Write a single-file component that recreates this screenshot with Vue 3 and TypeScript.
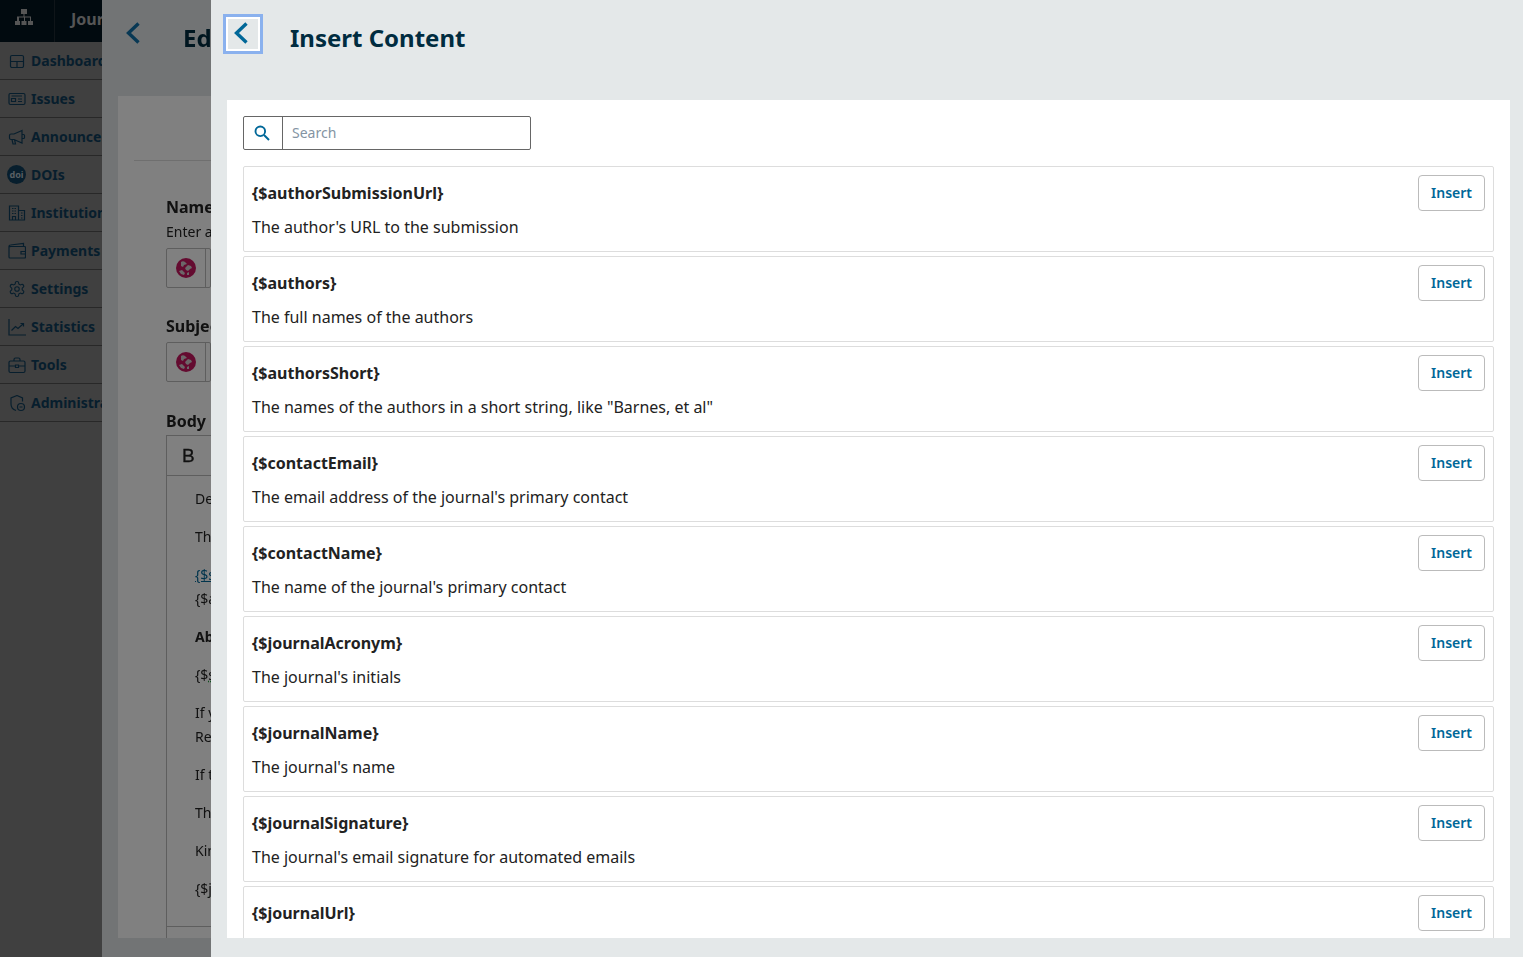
<script setup lang="ts">
interface NavItem {
  label: string;
  icon: string;
}

interface Variable {
  name: string;
  description: string;
}

const navItems: NavItem[] = [
  { label: 'Dashboard', icon: 'M4 3.5h10a1.5 1.5 0 0 1 1.5 1.5v9a1.5 1.5 0 0 1-1.5 1.5H4A1.5 1.5 0 0 1 2.500 14V5A1.500 1.500 0 0 1 4 3.500zM2.500 9.500h13M9 9.500v6' },
  { label: 'Issues', icon: 'M2 3.500h13.500a1.500 1.500 0 0 1 1.500 1.500v8a1.500 1.500 0 0 1-1.500 1.500H2.500A1.500 1.500 0 0 1 1 13V5a1.500 1.500 0 0 1 1-1.500zM3.500 6h10.500M10 9h4M10 11.500h4M3.500 8.500h4v3h-4z' },
  { label: 'Announcements', icon: 'M14 2.500 6 6H3a1.500 1.500 0 0 0-1.500 1.500v2.500A1.500 1.500 0 0 0 3 11.500h3l8 3.500zM14 6.500h1.500a1 1 0 0 1 1 1v2a1 1 0 0 1-1 1H14M4 11.500l1 4.500h2.500l-1-4.500' },
  { label: 'DOIs', icon: '' },
  { label: 'Institutions', icon: 'M1.500 16V2h9v14zM10.500 6.500h6V16h-6zM4 4.500h1.500M6.500 4.500H8M4 7h1.500M6.500 7H8M4 9.500h1.500M6.500 9.500H8M4.500 16v-3.500h3V16M13 9h1.500M13 11.500h1.500M13 14h1.500' },
  { label: 'Payments', icon: 'M1 4.500V15a1 1 0 0 0 1 1h14.500a1 1 0 0 0 1-1V5.500a1 1 0 0 0-1-1H2.500A1.500 1.500 0 0 1 1 4.500a1.500 1.500 0 0 1 1.500-1.500L15.500 1.500v3M13 9.500h4.500v2.500H13z' },
  { label: 'Settings', icon: 'gear' },
  { label: 'Statistics', icon: 'M1 1v16h17M3.500 12.500l4-4 2.500 2 5-4.500M12.500 5.500h3v3' },
  { label: 'Tools', icon: 'M2.500 5h13a1.500 1.500 0 0 1 1.500 1.500V15a1.500 1.500 0 0 1-1.500 1.500h-13A1.500 1.500 0 0 1 1 15V6.500A1.500 1.500 0 0 1 2.500 5zM6 5V3.500A1.500 1.500 0 0 1 7.500 2h3A1.500 1.500 0 0 1 12 3.500V5M1 10h6M11 10h6M7.500 9h3v2.500h-3z' },
  { label: 'Administration', icon: 'M9 1.500 3 4v6c0 3 2 5.500 5 6.500M9 1.500 14.500 4v3.500M16.500 13a3.500 3.500 0 1 1-7 0 3.500 3.500 0 0 1 7 0zM11.500 13h3' },
];

const variables: Variable[] = [
  { name: '{$authorSubmissionUrl}', description: "The author's URL to the submission" },
  { name: '{$authors}', description: 'The full names of the authors' },
  { name: '{$authorsShort}', description: 'The names of the authors in a short string, like "Barnes, et al"' },
  { name: '{$contactEmail}', description: "The email address of the journal's primary contact" },
  { name: '{$contactName}', description: "The name of the journal's primary contact" },
  { name: '{$journalAcronym}', description: "The journal's initials" },
  { name: '{$journalName}', description: "The journal's name" },
  { name: '{$journalSignature}', description: "The journal's email signature for automated emails" },
  { name: '{$journalUrl}', description: "The URL to the journal's homepage" },
];

const gearPath =
  'M12.220 2h-.44a2 2 0 0 0-2 2v.18a2 2 0 0 1-1 1.730l-.43.25a2 2 0 0 1-2 0l-.15-.08a2 2 0 0 0-2.730.730l-.22.38a2 2 0 0 0 .73 2.730l.15.1a2 2 0 0 1 1 1.720v.51a2 2 0 0 1-1 1.740l-.15.09a2 2 0 0 0-.73 2.730l.22.38a2 2 0 0 0 2.730.730l.15-.08a2 2 0 0 1 2 0l.43.25a2 2 0 0 1 1 1.730V20a2 2 0 0 0 2 2h.44a2 2 0 0 0 2-2v-.18a2 2 0 0 1 1-1.730l.43-.25a2 2 0 0 1 2 0l.15.08a2 2 0 0 0 2.730-.73l.22-.39a2 2 0 0 0-.73-2.730l-.15-.08a2 2 0 0 1-1-1.740v-.5a2 2 0 0 1 1-1.740l.15-.09a2 2 0 0 0 .73-2.730l-.22-.38a2 2 0 0 0-2.730-.73l-.15.08a2 2 0 0 1-2 0l-.43-.25a2 2 0 0 1-1-1.730V4a2 2 0 0 0-2-2zM15 12a3 3 0 1 1-6 0 3 3 0 0 1 6 0z';
</script>

<template>
  <div class="app">
    <aside class="sidebar">
      <div class="topbar">
        <div class="topbar-icon">
          <svg width="18" height="16" viewBox="0 0 18 16" fill="#aaa">
            <path d="M6 0h6v5H6zM0 12h5v4H0zM6.500 12h5v4h-5zM13 12h5v4h-5z" />
            <path d="M8.500 5h1v2.500h6.500V12h-1V8.500h-5V12h-1V8.500h-5V12H2V7.500h6.500z" />
          </svg>
        </div>
        <span class="topbar-title">Journal of Public Knowledge</span>
      </div>
      <nav>
        <a v-for="item in navItems" :key="item.label" class="nav-row">
          <span v-if="item.label === 'DOIs'" class="doi-badge">doi</span>
          <svg v-else-if="item.icon === 'gear'" class="nav-icon" viewBox="0 0 24 24" fill="none" stroke="currentColor" stroke-width="1.500">
            <path :d="gearPath" />
          </svg>
          <svg v-else class="nav-icon" viewBox="0 0 18 18" fill="none" stroke="currentColor" stroke-width="1.200">
            <path :d="item.icon" />
          </svg>
          <span>{{ item.label }}</span>
        </a>
      </nav>
    </aside>

    <div class="scrim"></div>

    <section class="modal modal-under">
      <header class="modal-header under-header">
        <span class="back-plain">
          <svg width="15" height="22" viewBox="0 0 15 22" fill="none" stroke="currentColor" stroke-width="3.400">
            <path d="M13.500 1.500 3.500 11l10 9.500" />
          </svg>
        </span>
        <h1 class="under-title">Edit Template</h1>
      </header>
      <div class="under-panel">
        <div class="under-rule"></div>
        <label class="field-label name-label">Name</label>
        <div class="field-hint">Enter a name for this template</div>
        <div class="locale-input">
          <span class="locale-cell">
            <svg width="20" height="20" viewBox="0 0 20 20">
              <circle cx="10" cy="10" r="10" fill="#c81660" />
              <path fill="#d8cdd2" d="M5 4c1-1 3-1 4 0l2 2-3 1-1 2-2-1zM9 10l3-3 3 1 1 2-2 1-2 2-2-1zM3 13l3-1 3 3-1 2-3-1zM11 15l2-1 0 3-2 0z" />
            </svg>
          </span>
        </div>
        <label class="field-label subject-label">Subject</label>
        <div class="locale-input">
          <span class="locale-cell">
            <svg width="20" height="20" viewBox="0 0 20 20">
              <circle cx="10" cy="10" r="10" fill="#c81660" />
              <path fill="#d8cdd2" d="M5 4c1-1 3-1 4 0l2 2-3 1-1 2-2-1zM9 10l3-3 3 1 1 2-2 1-2 2-2-1zM3 13l3-1 3 3-1 2-3-1zM11 15l2-1 0 3-2 0z" />
            </svg>
          </span>
        </div>
        <label class="field-label body-label">Body</label>
        <div class="editor">
          <div class="editor-toolbar"><span class="bold-tool">B</span></div>
          <div class="editor-body">
            <p>Dear {$recipientName},</p>
            <p>The following submission has been made to {$journalName}:</p>
            <p class="tight"><a class="var-link">{$submissionTitle}</a><br />{$authors}</p>
            <p><strong>Abstract</strong></p>
            <p>{$<span class="var">submissionAbstract</span>}</p>
            <p>If you would like to review this submission, please respond.<br />Regards,</p>
            <p>If this submission is not suitable, let us know.</p>
            <p>Thank you for considering this request.</p>
            <p>Kind regards,</p>
            <p>{$<span class="var">journalSignature</span>}</p>
          </div>
          <div class="editor-foot"></div>
        </div>
      </div>
    </section>

    <section class="modal modal-top">
      <header class="modal-header top-header">
        <button class="back-btn" aria-label="Back">
          <svg width="15" height="22" viewBox="0 0 15 22" fill="none" stroke="currentColor" stroke-width="3.400">
            <path d="M13.500 1.500 3.500 11l10 9.500" />
          </svg>
        </button>
        <h1 class="top-title">Insert Content</h1>
      </header>
      <div class="top-panel">
        <div class="search">
          <span class="search-icon">
            <svg width="16" height="16" viewBox="0 0 16 16" fill="none" stroke="currentColor" stroke-width="1.900">
              <circle cx="6.300" cy="6.300" r="4.800" />
              <path d="m10 10 5 5" />
            </svg>
          </span>
          <input class="search-input" type="text" placeholder="Search" />
        </div>
        <ul class="var-list">
          <li v-for="v in variables" :key="v.name" class="var-row">
            <div class="var-head">
              <strong>{{ v.name }}</strong>
              <button class="insert-btn">Insert</button>
            </div>
            <div class="var-desc">{{ v.description }}</div>
          </li>
        </ul>
      </div>
    </section>
  </div>
</template>

<style>
html,
body {
  margin: 0;
  overflow: hidden;
}
</style>

<style scoped>
.app {
  position: relative;
  height: 100vh;
  overflow: hidden;
  font-family: 'Noto Sans', sans-serif;
  font-size: 14px;
  color: #222;
}

.sidebar {
  width: 102px;
  height: 100%;
  overflow: hidden;
  background: #808080;
}

.topbar {
  display: flex;
  align-items: center;
  height: 42px;
  background: #02141f;
  white-space: nowrap;
}

.topbar-icon {
  display: flex;
  flex: none;
  align-items: center;
  justify-content: center;
  box-sizing: border-box;
  width: 55px;
  height: 100%;
  padding: 0 6px 8px 0;
  border-right: 1px solid #1e2a32;
}

.topbar-title {
  margin-left: 16px;
  padding-bottom: 4px;
  font-size: 16px;
  font-weight: 700;
  color: #aaa;
}

.nav-row {
  display: flex;
  align-items: center;
  gap: 5px;
  box-sizing: border-box;
  height: 38px;
  padding-left: 8px;
  border-bottom: 1px solid #505050;
  font-size: 14px;
  font-weight: 700;
  color: #0f3d5a;
  white-space: nowrap;
}

.nav-icon {
  flex: none;
  width: 18px;
  height: 18px;
}

.doi-badge {
  display: flex;
  flex: none;
  align-items: center;
  justify-content: center;
  width: 19px;
  height: 19px;
  margin-left: -1px;
  border-radius: 50%;
  background: #0f3d5a;
  color: #b0bcc4;
  font-size: 9px;
  font-weight: 700;
}

.scrim {
  position: absolute;
  inset: 0;
  background: rgba(0, 0, 0, 0.5);
}

.modal {
  position: absolute;
  top: 0;
  bottom: 0;
  display: flex;
  flex-direction: column;
  background: #e4e8e9;
}

.modal-under {
  left: 102px;
  width: 109px;
  overflow: hidden;
  filter: brightness(0.5);
}

.modal-top {
  left: 211px;
  right: 0;
}

.modal-header {
  display: flex;
  flex: none;
  align-items: flex-start;
}

.under-header {
  height: 96px;
}

.back-plain {
  display: flex;
  margin: 22px 0 0 23px;
  color: #106fa8;
}

.under-title {
  margin: 21px 0 0 43px;
  font-size: 24px;
  font-weight: 700;
  line-height: 34px;
  color: #002c40;
  white-space: nowrap;
}

.under-panel {
  flex: 1;
  min-height: 0;
  margin: 0 0 19px 16px;
  padding-left: 16px;
  overflow: hidden;
  background: #fff;
}

.under-rule {
  height: 1px;
  margin-top: 64px;
  background: #ddd;
}

.field-label {
  display: block;
  margin-left: 32px;
  font-size: 16px;
  font-weight: 700;
  line-height: 24px;
  white-space: nowrap;
}

.name-label {
  margin-top: 34px;
}

.field-hint {
  margin: 2px 0 6px 32px;
  font-size: 14px;
  line-height: 21px;
  white-space: nowrap;
}

.subject-label {
  margin-top: 26px;
  margin-bottom: 4px;
}

.body-label {
  margin-top: 27px;
  margin-bottom: 2px;
}

.locale-input {
  box-sizing: border-box;
  height: 40px;
  margin-left: 32px;
  border: 1px solid #bbb;
  border-radius: 2px;
}

.locale-cell {
  display: flex;
  align-items: center;
  justify-content: center;
  box-sizing: border-box;
  width: 39px;
  height: 100%;
  border-right: 1px solid #bbb;
}

.editor {
  margin-left: 32px;
  border: 1px solid #bbb;
  border-right: 0;
  background: #fff;
}

.editor-toolbar {
  display: flex;
  align-items: center;
  height: 39px;
  border-bottom: 1px solid #bbb;
}

.bold-tool {
  margin-left: 15px;
  font-family: 'Liberation Sans', sans-serif;
  font-size: 19px;
  -webkit-text-stroke: 0.3px #222;
  color: #222;
}

.editor-body {
  height: 439px;
  padding: 11px 0 0 28px;
  border-bottom: 1px solid #bbb;
  overflow: hidden;
  font-size: 14px;
  line-height: 24px;
  white-space: nowrap;
}

.editor-body p {
  margin: 0 0 14px;
}

.var-link {
  color: #006798;
  text-decoration: underline;
}

.var {
  text-decoration: underline dotted #1f9d3a;
}

.editor-foot {
  height: 40px;
}

.top-header {
  height: 100px;
}

.back-btn {
  display: flex;
  align-items: center;
  justify-content: center;
  box-sizing: border-box;
  width: 40px;
  height: 40px;
  margin: 14px 0 0 12px;
  padding: 0 5px 3px 0;
  border: 3px solid #8ab1ee;
  box-shadow: inset 0 0 0 2px #fff;
  background: transparent;
  color: #006798;
}

.top-title {
  margin: 21px 0 0 27px;
  font-size: 24px;
  font-weight: 700;
  line-height: 34px;
  color: #002c40;
}

.top-panel {
  flex: 1;
  min-height: 0;
  margin: 0 13px 19px 16px;
  padding: 16px;
  overflow: hidden;
  background: #fff;
}

.search {
  display: flex;
  box-sizing: border-box;
  width: 288px;
  height: 34px;
  border: 1px solid #666;
  border-radius: 2px;
}

.search-icon {
  display: flex;
  flex: none;
  align-items: center;
  justify-content: center;
  box-sizing: border-box;
  width: 39px;
  padding-right: 3px;
  border-right: 1px solid #666;
  color: #006798;
}

.search-input {
  flex: 1;
  min-width: 0;
  padding: 0 9px 2px;
  border: 0;
  outline: 0;
  background: transparent;
  font: inherit;
  color: #222;
}

.search-input::placeholder {
  color: #8494a3;
  opacity: 1;
}

.var-list {
  display: flex;
  flex-direction: column;
  gap: 4px;
  margin: 16px 0 0;
  padding: 0;
  list-style: none;
}

.var-row {
  box-sizing: border-box;
  height: 86px;
  padding: 8px;
  border: 1px solid #ddd;
  border-radius: 2px;
}

.var-head {
  display: flex;
  align-items: center;
  justify-content: space-between;
  height: 36px;
  font-size: 16px;
}

.var-head strong {
  font-weight: 700;
}

.insert-btn {
  box-sizing: border-box;
  height: 36px;
  padding: 0 12px 2px;
  border: 1px solid #bbb;
  border-radius: 4px;
  background: #fff;
  font-family: inherit;
  font-size: 14px;
  font-weight: 600;
  color: #006798;
}

.var-desc {
  font-size: 16px;
  line-height: 32px;
}
</style>
